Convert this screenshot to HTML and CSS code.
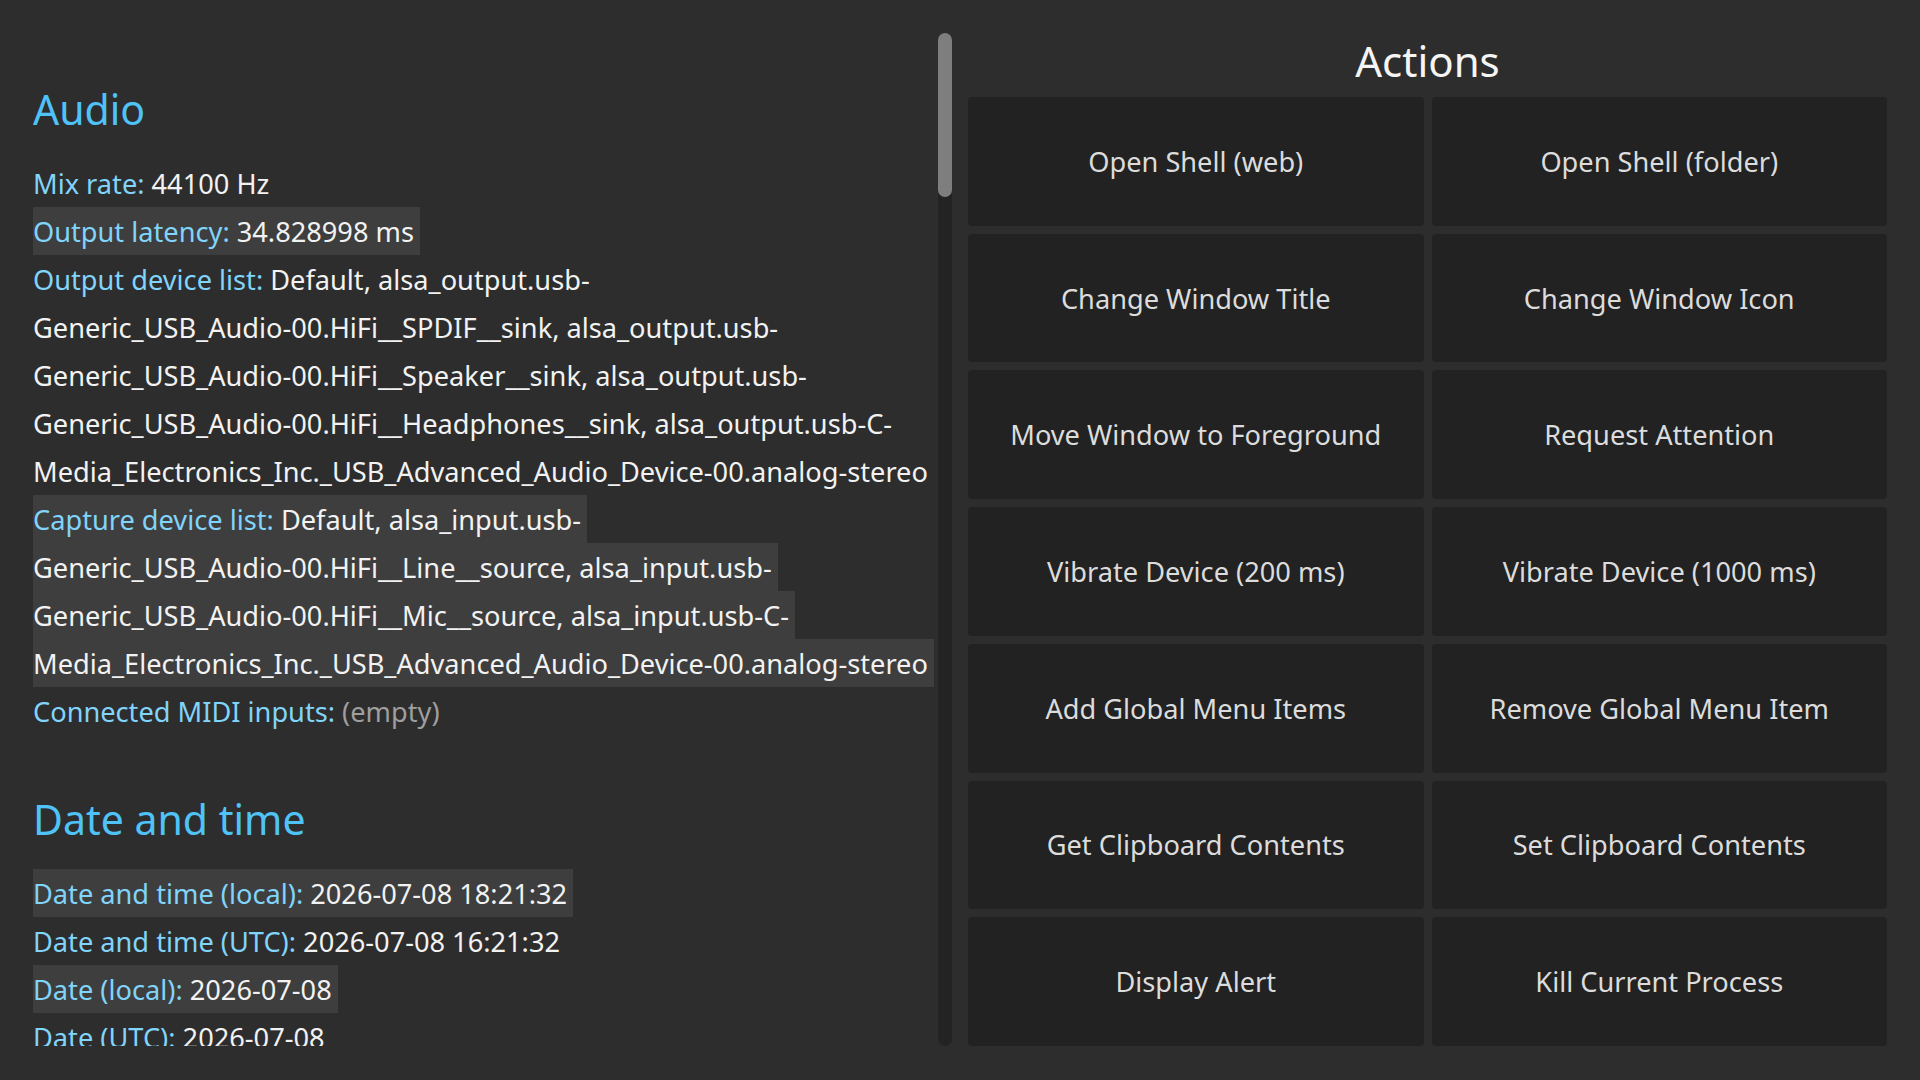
FILE: index.html
```html
<!DOCTYPE html>
<html lang="en">
<head>
<meta charset="utf-8">
<title>System Information</title>
<link rel="stylesheet" href="styles.css">
</head>
<body>
<main class="app">
  <div class="info-pane">
    <div class="info-scroll">
      <section class="section">
        <h2 class="section-title">Audio</h2>
        <p class="row"><span class="line"><span class="label">Mix rate:</span> 44100 Hz</span></p>
        <p class="row"><span class="line hl"><span class="label">Output latency:</span> 34.828998 ms</span></p>
        <p class="row"><span class="line"><span class="label">Output device list:</span> Default, alsa_output.usb-<br>Generic_USB_Audio-00.HiFi__SPDIF__sink, alsa_output.usb-<br>Generic_USB_Audio-00.HiFi__Speaker__sink, alsa_output.usb-<br>Generic_USB_Audio-00.HiFi__Headphones__sink, alsa_output.usb-C-<br>Media_Electronics_Inc._USB_Advanced_Audio_Device-00.analog-stereo</span></p>
        <p class="row"><span class="line hl"><span class="label">Capture device list:</span> Default, alsa_input.usb-<br>Generic_USB_Audio-00.HiFi__Line__source, alsa_input.usb-<br>Generic_USB_Audio-00.HiFi__Mic__source, alsa_input.usb-C-<br>Media_Electronics_Inc._USB_Advanced_Audio_Device-00.analog-stereo</span></p>
        <p class="row"><span class="line"><span class="label">Connected MIDI inputs:</span> <span class="muted">(empty)</span></span></p>
      </section>
      <section class="section">
        <h2 class="section-title">Date and time</h2>
        <p class="row"><span class="line hl"><span class="label">Date and time (local):</span> 2026-07-08 18:21:32</span></p>
        <p class="row"><span class="line"><span class="label">Date and time (UTC):</span> 2026-07-08 16:21:32</span></p>
        <p class="row"><span class="line hl"><span class="label">Date (local):</span> 2026-07-08</span></p>
        <p class="row"><span class="line"><span class="label">Date (UTC):</span> 2026-07-08</span></p>
      </section>
    </div>
    <div class="scrollbar"><div class="scroll-thumb"></div></div>
  </div>
  <div class="actions-pane">
    <h1 class="actions-title">Actions</h1>
    <div class="actions-grid">
      <button class="action">Open Shell (web)</button>
      <button class="action">Open Shell (folder)</button>
      <button class="action">Change Window Title</button>
      <button class="action">Change Window Icon</button>
      <button class="action">Move Window to Foreground</button>
      <button class="action">Request Attention</button>
      <button class="action">Vibrate Device (200 ms)</button>
      <button class="action">Vibrate Device (1000 ms)</button>
      <button class="action">Add Global Menu Items</button>
      <button class="action">Remove Global Menu Item</button>
      <button class="action">Get Clipboard Contents</button>
      <button class="action">Set Clipboard Contents</button>
      <button class="action">Display Alert</button>
      <button class="action">Kill Current Process</button>
    </div>
  </div>
</main>
</body>
</html>
```

FILE: styles.css
```css
* { box-sizing: border-box; }

html, body {
  margin: 0;
  padding: 0;
  height: 100%;
}

body {
  background: #2d2d2d;
  color: #f2f2f2;
  font-family: "Noto Sans", "Open Sans", sans-serif;
  overflow: hidden;
}

.app {
  display: flex;
  height: 1080px;
  padding: 33px 33px 34px 33px;
  gap: 16px;
}

.info-pane {
  display: flex;
  gap: 4px;
  width: 919px;
  flex: none;
}

.info-scroll {
  flex: 1;
  overflow: hidden;
  padding-top: 48px;
}

.section + .section {
  margin-top: 56px;
}

.section-title {
  margin: 0 0 22px;
  font-size: 41px;
  line-height: 56px;
  font-weight: 400;
  color: #4fc3f7;
}

.row {
  margin: 0;
  font-size: 27.2px;
  line-height: 48px;
  white-space: nowrap;
}

.line {
  padding: 5.5px 6px 5.5px 0;
  -webkit-box-decoration-break: clone;
  box-decoration-break: clone;
}

.line.hl {
  background: #3e3e3e;
}

.label {
  color: #81d4fa;
}

.muted {
  color: #9e9e9e;
}

.scrollbar {
  width: 14px;
  flex: none;
  background: #232323;
  border-radius: 7px;
}

.scroll-thumb {
  height: 164px;
  background: #7e7e7e;
  border-radius: 7px;
}

.actions-pane {
  flex: 1;
  display: flex;
  flex-direction: column;
  gap: 8px;
}

.actions-title {
  margin: 0;
  text-align: center;
  font-size: 42px;
  line-height: 56px;
  font-weight: 400;
  color: #f5f5f5;
}

.actions-grid {
  flex: 1;
  display: grid;
  grid-template-columns: 1fr 1fr;
  grid-template-rows: repeat(7, 1fr);
  gap: 8px;
}

.action {
  background: #222222;
  border: none;
  border-radius: 4px;
  color: #dcdcdc;
  font-family: "Noto Sans", "Open Sans", sans-serif;
  font-size: 27.2px;
  padding: 0;
  margin: 0;
}
```
